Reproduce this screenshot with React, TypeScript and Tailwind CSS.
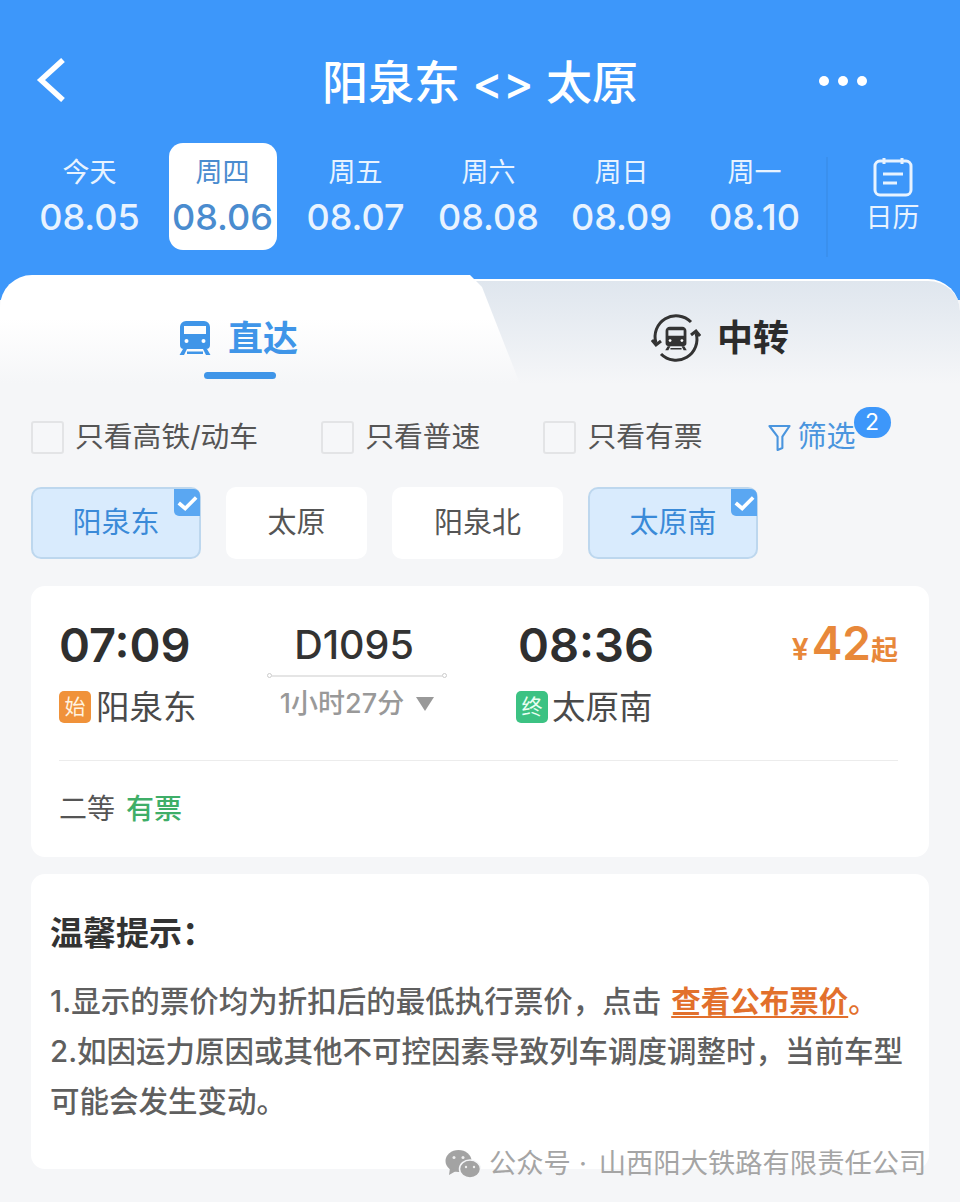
const sans = "font-['Inter','Noto_Sans_CJK_SC',sans-serif]";

const days = [
  { week: '今天', date: '08.05' },
  { week: '周四', date: '08.06', active: true },
  { week: '周五', date: '08.07' },
  { week: '周六', date: '08.08' },
  { week: '周日', date: '08.09' },
  { week: '周一', date: '08.10' },
];

function TrainGlyph({ color, className }: { color: string; className?: string }) {
  return (
    <svg viewBox="0 0 34 36" className={className} fill={color}>
      <path d="M8 1h18a6 6 0 0 1 6 6v18a4 4 0 0 1-4 4H6a4 4 0 0 1-4-4V7a6 6 0 0 1 6-6zM6 6v8h22V6H6z" fillRule="evenodd" />
      <circle cx="8.500" cy="21" r="2" fill="#fff" />
      <circle cx="25.500" cy="21" r="2" fill="#fff" />
      <path d="M5 29h4l-3 6H1.500zM25 29h4l3.500 6H28zM9 31.500h16v2.500H9z" />
    </svg>
  );
}

function Check({ label, className }: { label: string; className?: string }) {
  return (
    <div className={`flex items-center gap-[11px] ${className ?? ''}`}>
      <span className="w-[33px] h-[33px] rounded-[3px] border-2 border-[#e3e4e6] bg-[#f6f7f9]" />
      <span className="text-[28.800px] leading-[36px] text-[#555] whitespace-nowrap">{label}</span>
    </div>
  );
}

function Station({ label, on, className }: { label: string; on?: boolean; className: string }) {
  return (
    <div
      className={`relative h-[72px] flex items-center justify-center rounded-[10px] text-[29px] ${className} ${
        on ? 'bg-[#d9ebfd] border-2 border-[#bdd7ee] text-[#3a8ad8]' : 'bg-white text-[#555]'
      }`}
    >
      {label}
      {on && (
        <span className="absolute top-0 -right-[1px] w-[26px] h-[27px] rounded-bl-[5px] rounded-tr-[6px] bg-[#5aa7f2] flex items-center justify-center">
          <svg viewBox="0 0 24 24" className="w-[22px] h-[22px]" fill="none" stroke="#fff" strokeWidth="4">
            <path d="M3 12l7 6L22 6" />
          </svg>
        </span>
      )}
    </div>
  );
}

export default function App() {
  return (
    <div className={`relative w-[960px] h-[1202px] overflow-hidden bg-[#f5f6f8] ${sans}`}>
      {/* Header */}
      <div className="h-[300px] bg-[#3d97fa] text-white">
        <div className="relative flex items-center justify-center pt-[52px] h-[112px]">
          <svg viewBox="0 0 30 44" className="absolute left-[36px] top-[58px] w-[30px] h-[44px]" fill="none" stroke="#fff" strokeWidth="5.500">
            <path d="M27 2L5 22l22 20" />
          </svg>
          <span className="text-[46px] leading-[56px] font-medium whitespace-nowrap">阳泉东 &lt;&gt; 太原</span>
          <div className="absolute left-[819px] top-[76px] flex gap-[9px]">
            <span className="w-[10px] h-[10px] rounded-full bg-white" />
            <span className="w-[10px] h-[10px] rounded-full bg-white" />
            <span className="w-[10px] h-[10px] rounded-full bg-white" />
          </div>
        </div>
        <div className="flex pl-[23px] pt-[31px]">
          {days.map(d => (
            <div key={d.date} className="w-[133px] flex justify-center">
              <div className={`w-[108px] h-[107px] rounded-[14px] flex flex-col items-center pt-[12px] ${d.active ? 'bg-white text-[#4a8ccf]' : 'text-[#e8f3ff]'}`}>
                <span className="text-[27px] leading-[36px]">{d.week}</span>
                <span className="text-[36px] leading-[46px] mt-[3px] font-medium whitespace-nowrap">{d.date}</span>
              </div>
            </div>
          ))}
          <div className="ml-[5px] h-[100px] mt-[14px] w-[112px] border-l-2 border-[#3a90ee] flex flex-col items-center">
            <svg viewBox="0 0 40 40" className="w-[40px] h-[40px] ml-[19px]" fill="none" stroke="#e8f3ff" strokeWidth="3">
              <rect x="2" y="4" width="36" height="34" rx="5" />
              <path d="M11 1v6M29 1v6M10 17h20M10 26h14" />
            </svg>
            <span className="text-[27px] leading-[32px] mt-[5px] ml-[19px] text-[#e8f3ff]">日历</span>
          </div>
        </div>
      </div>

      {/* Tabs */}
      <div className="relative -mt-[25px] h-[109px] flex">
        <div className="absolute left-0 right-0 top-[4px] h-[105px] rounded-t-[32px] border-t-2 border-white bg-gradient-to-b from-[#dfe6ee] to-[#f5f6f8]" />
        <div className="relative w-[520px] h-[109px] bg-gradient-to-b from-white from-40% to-[#f5f6f8] rounded-tl-[32px] flex flex-col items-center pt-[42px] [clip-path:polygon(0_0,470px_0,482px_12px,520px_100%,0_100%)]">
          <div className="flex items-center ml-[-44px] gap-[16px]">
            <TrainGlyph color="#3f95e8" className="w-[34px] h-[36px]" />
            <span className="text-[35px] leading-[42px] font-bold text-[#3f95e8]">直达</span>
          </div>
          <span className="ml-[-40px] mt-[13px] w-[72px] h-[7px] rounded-full bg-[#3f95e8]" />
        </div>
        <div className="relative flex-1 flex justify-center pt-[38px] pr-[40px]">
          <div className="flex items-center h-[50px] gap-[16px]">
            <span className="relative w-[50px] h-[50px]">
              <svg viewBox="0 0 50 50" className="absolute inset-0" fill="none" stroke="#333" strokeWidth="3">
                <path d="M5 30A21 21 0 0 1 40 9M45 20A21 21 0 0 1 10 41" />
                <path d="M1 27l4 5 5-4M49 23l-4-5-5 4" />
              </svg>
              <TrainGlyph color="#333" className="absolute left-[13px] top-[13px] w-[24px] h-[25px]" />
            </span>
            <span className="text-[36px] leading-[42px] font-bold text-[#2b2b2b]">中转</span>
          </div>
        </div>
      </div>

      {/* Filters */}
      <div className="flex items-center h-[36px] mt-[35px] pl-[31px]">
        <Check label="只看高铁/动车" />
        <Check label="只看普速" className="ml-[63px]" />
        <Check label="只看有票" className="ml-[63px]" />
        <div className="relative flex items-center ml-[65px] text-[#4a95de]">
          <svg viewBox="0 0 24 28" className="w-[23px] h-[27px]" fill="none" stroke="#4a95de" strokeWidth="2.200">
            <path d="M1.500 2h21L15 13v12l-5 2V13z" strokeLinejoin="round" />
          </svg>
          <span className="ml-[7px] text-[29px] leading-[36px]">筛选</span>
          <span className="absolute -top-[12px] -right-[35px] w-[37px] h-[31px] rounded-full bg-[#3d97fa] text-white text-[23px] flex items-center justify-center">2</span>
        </div>
      </div>

      {/* Stations */}
      <div className="flex pl-[31px] mt-[32px]">
        <Station label="阳泉东" on className="w-[170px]" />
        <Station label="太原" className="w-[141px] ml-[25px]" />
        <Station label="阳泉北" className="w-[171px] ml-[25px]" />
        <Station label="太原南" on className="w-[170px] ml-[25px]" />
      </div>

      {/* Train card */}
      <div className="mx-[31px] mt-[27px] h-[271px] w-[898px] rounded-[14px] bg-white pl-[28px] pr-[31px]">
        <div className="flex h-[175px] border-b border-[#ececec]">
          <div className="w-[208px] pt-[29px]">
            <div className="text-[47px] leading-[60px] font-semibold text-[#2f2f2f]">07:09</div>
            <div className="flex items-center mt-[11px]">
              <span className="w-[32px] h-[32px] rounded-[5px] bg-[#f0923a] text-[#fff3e0] text-[21px] flex items-center justify-center">始</span>
              <span className="ml-[5px] text-[33.500px] leading-[42px] text-[#4a4a4a]">阳泉东</span>
            </div>
          </div>
          <div className="w-[180px] flex flex-col items-center pt-[36px]">
            <div className="text-[39.500px] leading-[46px] font-medium text-[#333] -ml-[6px]">D1095</div>
            <div className="flex items-center w-[180px] mt-[5px]">
              <span className="w-[5px] h-[5px] rounded-full border border-[#ccc]" />
              <span className="flex-1 h-[2px] bg-[#e5e5e5]" />
              <span className="w-[5px] h-[5px] rounded-full border border-[#ccc]" />
            </div>
            <div className="flex items-center mt-[8px] text-[27px] leading-[36px] text-[#999] font-medium whitespace-nowrap">
              1小时27分
              <svg viewBox="0 0 18 14" className="w-[18px] h-[14px] ml-[12px]" fill="#999">
                <path d="M0 0h18L9 14z" />
              </svg>
            </div>
          </div>
          <div className="w-[255px] pl-[71px] pt-[29px]">
            <div className="text-[47px] leading-[60px] font-semibold text-[#2f2f2f]">08:36</div>
            <div className="flex items-center mt-[11px] -ml-[2px] whitespace-nowrap">
              <span className="w-[32px] h-[32px] rounded-[5px] bg-[#3cc283] text-[#e9fff3] text-[21px] flex items-center justify-center shrink-0">终</span>
              <span className="ml-[4px] text-[33.500px] leading-[42px] text-[#4a4a4a]">太原南</span>
            </div>
          </div>
          <div className="flex-1 flex justify-end items-baseline pt-[28px] text-[#e8883a] font-semibold">
            <span className="text-[30px] leading-[58px] mr-[3px]">¥</span>
            <span className="text-[46px] leading-[58px]">42</span>
            <span className="text-[27px] leading-[58px]">起</span>
          </div>
        </div>
        <div className="flex items-center gap-[11px] pt-[30px] text-[28px] leading-[36px]">
          <span className="text-[#555]">二等</span>
          <span className="text-[#3fae68] font-medium">有票</span>
        </div>
      </div>

      {/* Notice */}
      <div className="relative mx-[31px] mt-[17px] w-[898px] h-[295px] rounded-[14px] bg-white pl-[19px] pt-[37px]">
        <div className="text-[33px] leading-[44px] font-semibold text-[#333]">温馨提示：</div>
        <div className="mt-[21px] text-[29.500px] leading-[50px] text-[#5f5f5f] font-medium w-[870px] whitespace-nowrap">
          <div>
            1.显示的票价均为折扣后的最低执行票价，点击<span className="ml-[10px] text-[#e2702c] font-semibold underline underline-offset-4">查看公布票价</span><span className="text-[#e2702c]">。</span>
          </div>
          <div>2.如因运力原因或其他不可控因素导致列车调度调整时，当前车型</div>
          <div>可能会发生变动。</div>
        </div>
      </div>

      {/* Watermark */}
      <div className="absolute left-[445px] top-[1146px] flex items-center text-[27.300px] leading-[36px] text-[#a5a5a5] whitespace-nowrap">
        <svg viewBox="0 0 36 30" className="w-[36px] h-[30px]" fill="#a3a3a3">
          <ellipse cx="13.500" cy="12" rx="13" ry="11" />
          <path d="M5 19l-1 7 7-4z" />
          <ellipse cx="25" cy="20" rx="10.500" ry="9" stroke="#f5f6f8" strokeWidth="1.500" />
          <circle cx="9" cy="8.500" r="1.500" fill="#eee" />
          <circle cx="18" cy="8.500" r="1.500" fill="#eee" />
          <circle cx="21" cy="18" r="1.200" fill="#eee" />
          <circle cx="29" cy="18" r="1.200" fill="#eee" />
        </svg>
        <span className="ml-[8px]">公众号</span>
        <span className="ml-[8px]">·</span>
        <span className="ml-[12px]">山西阳大铁路有限责任公司</span>
      </div>
    </div>
  );
}
